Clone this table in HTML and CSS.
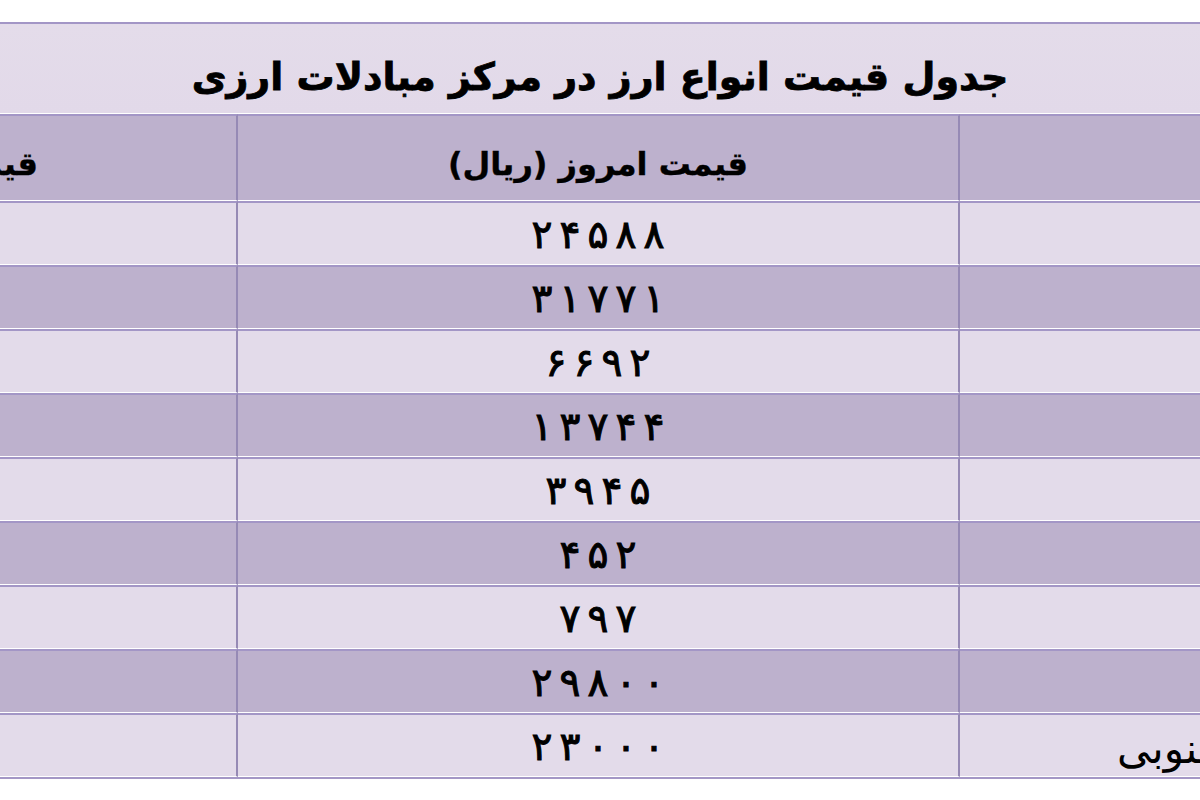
FILE: index.html
```html
<!DOCTYPE html>
<html lang="fa">
<head>
<meta charset="utf-8">
<title>جدول قیمت انواع ارز</title>
<link rel="stylesheet" href="styles.css">
</head>
<body>
<div class="viewport">
  <div class="rates" dir="rtl">
    <div class="cell title">جدول قیمت انواع ارز در مرکز مبادلات ارزی</div>

    <div class="cell head name"></div>
    <div class="cell head mid">قیمت امروز (ریال)</div>
    <div class="cell head left">قیمت دیروز (ریال)</div>

    <div class="cell light name">دلار آمریکا</div>
    <div class="cell light mid num"><span>۲</span><span>۴</span><span>۵</span><span>۸</span><span>۸</span></div>
    <div class="cell light left num"><span>۲</span><span>۴</span><span>۵</span><span>۸</span><span>۸</span></div>

    <div class="cell dark name">یورو</div>
    <div class="cell dark mid num"><span>۳</span><span>۱</span><span>۷</span><span>۷</span><span>۱</span></div>
    <div class="cell dark left num"><span>۳</span><span>۱</span><span>۷</span><span>۷</span><span>۱</span></div>

    <div class="cell light name">درهم امارات</div>
    <div class="cell light mid num"><span>۶</span><span>۶</span><span>۹</span><span>۲</span></div>
    <div class="cell light left num"><span>۶</span><span>۶</span><span>۹</span><span>۲</span></div>

    <div class="cell dark name">فرانک سوئیس</div>
    <div class="cell dark mid num"><span>۱</span><span>۳</span><span>۷</span><span>۴</span><span>۴</span></div>
    <div class="cell dark left num"><span>۱</span><span>۳</span><span>۷</span><span>۴</span><span>۴</span></div>

    <div class="cell light name">یوان چین</div>
    <div class="cell light mid num"><span>۳</span><span>۹</span><span>۴</span><span>۵</span></div>
    <div class="cell light left num"><span>۳</span><span>۹</span><span>۴</span><span>۵</span></div>

    <div class="cell dark name">روپیه هند</div>
    <div class="cell dark mid num"><span>۴</span><span>۵</span><span>۲</span></div>
    <div class="cell dark left num"><span>۴</span><span>۵</span><span>۲</span></div>

    <div class="cell light name">لیر ترکیه</div>
    <div class="cell light mid num"><span>۷</span><span>۹</span><span>۷</span></div>
    <div class="cell light left num"><span>۷</span><span>۹</span><span>۷</span></div>

    <div class="cell dark name">ین ژاپن (۱۰۰۰)</div>
    <div class="cell dark mid num"><span>۲</span><span>۹</span><span>۸</span><span>۰</span><span>۰</span></div>
    <div class="cell dark left num"><span>۲</span><span>۹</span><span>۸</span><span>۰</span><span>۰</span></div>

    <div class="cell light name">هزار وون کره جنوبی</div>
    <div class="cell light mid num"><span>۲</span><span>۳</span><span>۰</span><span>۰</span><span>۰</span></div>
    <div class="cell light left num"><span>۲</span><span>۳</span><span>۰</span><span>۰</span><span>۰</span></div>
  </div>
</div>
</body>
</html>
```

FILE: styles.css
```css
html, body {
  margin: 0;
  padding: 0;
  background: #ffffff;
}

.viewport {
  width: 1200px;
  height: 800px;
  overflow: hidden;
  background: #ffffff;
}

.rates {
  display: grid;
  grid-template-columns: 724px 722px 722px;
  width: 2168px;
  margin-left: -484px;
  margin-top: 22px;
  border-bottom: 2px solid #a497c6;
  font-family: "DejaVu Sans", sans-serif;
  color: #000;
}

.cell {
  display: flex;
  align-items: center;
  justify-content: center;
  box-sizing: border-box;
  border-top: 2px solid #a396c6;
  border-bottom: 1px solid #ffffff;
  height: 64px;
  white-space: nowrap;
}

.title {
  grid-column: 1 / 4;
  height: 92px;
  background: linear-gradient(#e4dcea, #e2d9e9);
  font-size: 38px;
  font-weight: bold;
  padding-top: 16px;
  -webkit-text-stroke: 0.8px #000;
}

.head {
  height: 87px;
  background: #bdb1cd;
  font-size: 32px;
  font-weight: bold;
  padding-top: 12px;
  -webkit-text-stroke: 0.4px #000;
}

.head.left {
  padding-left: 26px;
}

.light {
  background: #e3dbea;
}

.dark {
  background: #bdb1cd;
}

.mid,
.left {
  border-right: 2px solid #968ab5;
}

.num {
  direction: ltr;
  gap: 7px;
  font-size: 39px;
  padding-top: 2px;
  -webkit-text-stroke: 1px #000;
}

.name {
  justify-content: flex-start;
  padding-right: 206px;
  font-size: 42px;
  padding-top: 6px;
}
```
